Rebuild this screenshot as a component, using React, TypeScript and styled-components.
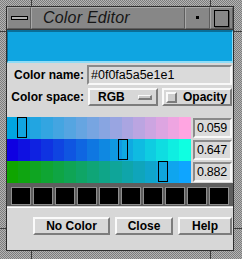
import * as React from 'react'
import styled, { createGlobalStyle } from 'styled-components'

const GlobalStyle = createGlobalStyle`
  html, body {
    margin: 0;
    padding: 0;
    background: #d7d7d7;
  }
  body {
    font-family: "Liberation Sans", Arial, sans-serif;
  }
`

// Motif-ish window frame with the stippled border and corner notches
const Frame = styled.div`
  width: 242px;
  height: 259px;
  box-sizing: border-box;
  padding: 6px 8px 8px 6px;
  display: flex;
  background:
    linear-gradient(#3c3c3c, #3c3c3c) 31px 0 / 1px 6px no-repeat,
    linear-gradient(#3c3c3c, #3c3c3c) 210px 0 / 1px 6px no-repeat,
    linear-gradient(#3c3c3c, #3c3c3c) 31px 251px / 1px 8px no-repeat,
    linear-gradient(#3c3c3c, #3c3c3c) 210px 251px / 1px 8px no-repeat,
    linear-gradient(#3c3c3c, #3c3c3c) 0 31px / 6px 1px no-repeat,
    linear-gradient(#3c3c3c, #3c3c3c) 0 228px / 6px 1px no-repeat,
    linear-gradient(#3c3c3c, #3c3c3c) 234px 31px / 8px 1px no-repeat,
    linear-gradient(#3c3c3c, #3c3c3c) 234px 228px / 8px 1px no-repeat,
    repeating-conic-gradient(#b4b4b4 0 25%, #7c7c7c 0 50%) 0 0 / 2px 2px;
`

const Inner = styled.div`
  flex: 1;
  display: flex;
  flex-direction: column;
  border: 1px solid #2e2e2e;
  background: #d7d7d7;
`

const TitleBar = styled.div`
  display: flex;
  height: 22px;
  background: #878787;
  border-bottom: 1px solid #3a3a3a;
`

const TitleButton = styled.div<{ $w: number }>`
  width: ${(p) => p.$w}px;
  box-sizing: border-box;
  border-top: 1px solid #a9a9a9;
  border-left: 1px solid #a9a9a9;
  border-right: 1px solid #5e5e5e;
  border-bottom: 1px solid #5e5e5e;
  display: flex;
  align-items: center;
  justify-content: center;
`

const Title = styled(TitleButton)`
  flex: 1;
  justify-content: flex-start;
  padding-left: 11px;
  font-style: italic;
  font-size: 16px;
  color: #161616;
  letter-spacing: 0.2px;
`

const MenuBar = styled.div`
  width: 15px;
  height: 2px;
  border: 1px solid #000;
  background: #b0b0b0;
`

const MinDot = styled.div`
  width: 3px;
  height: 3px;
  background: #000;
  margin-top: -1px;
`

const MaxBox = styled.div`
  width: 13px;
  height: 15px;
  border: 1px solid #000;
  box-shadow: 1px 1px 0 #5a5a5a;
`

const Swatch = styled.div<{ $color: string }>`
  height: 33px;
  box-sizing: border-box;
  background: ${(p) => p.$color};
  border-top: 2px solid #0a6e98;
  border-left: 1px solid #0a6e98;
  border-bottom: 2px solid #8fdcf6;
  border-right: 1px solid #8fdcf6;
`

const Form = styled.div`
  display: grid;
  grid-template-columns: 80px 1fr;
  row-gap: 3px;
  margin-top: 2px;
  padding-right: 1px;
`

const Label = styled.div`
  font-weight: bold;
  font-size: 12px;
  color: #000;
  text-align: right;
  padding-right: 3px;
  display: flex;
  align-items: center;
  justify-content: flex-end;
`

const sunken = `
  box-sizing: border-box;
  border-style: solid;
  border-width: 2px;
  border-color: #8a8a8a #f8f8f8 #f8f8f8 #8a8a8a;
`

const raised = `
  box-sizing: border-box;
  border-style: solid;
  border-width: 2px;
  border-color: #fafafa #7c7c7c #7c7c7c #fafafa;
`

const TextField = styled.div`
  ${sunken}
  height: 20px;
  background: #dadada;
  font-size: 12.5px;
  color: #000;
  padding-left: 2px;
  display: flex;
  align-items: center;
`

const Controls = styled.div`
  display: flex;
  gap: 4px;
  padding-left: 1px;
`

const OptionButton = styled.div`
  ${raised}
  flex: 1;
  height: 18px;
  background: #d7d7d7;
  display: flex;
  align-items: center;
  font-weight: bold;
  font-size: 12px;
  color: #000;
`

const OptionText = styled.span`
  flex: 1;
  padding-left: 8px;
`

const Indicator = styled.div`
  ${raised}
  border-width: 1px 2px 2px 1px;
  width: 14px;
  height: 5px;
  margin-right: 4px;
  background: #c9c9c9;
`

const Check = styled.div`
  ${raised}
  width: 11px;
  height: 11px;
  margin: 0 6px 0 2px;
  background: #cdcdcd;
`

const Sliders = styled.div`
  margin-top: 11px;
  display: flex;
  flex-direction: column;
  padding-right: 1px;
`

const SliderRow = styled.div`
  display: flex;
  align-items: center;
  gap: 2px;
  height: 22px;
`

const Track = styled.div<{ $bands: string }>`
  position: relative;
  flex: 1;
  height: 22px;
  background: ${(p) => p.$bands};
`

const Thumb = styled.div`
  position: absolute;
  top: 0;
  width: 10px;
  height: 21px;
  box-sizing: border-box;
  border: 1px solid #000;
`

const ValueField = styled(TextField)`
  width: 39px;
  letter-spacing: -0.3px;
`

const Palette = styled.div`
  display: flex;
  gap: 2px;
  height: 23px;
  box-sizing: border-box;
  padding: 4px 0 1px 4px;
  background: #5e5e5e;
`

const Cell = styled.div`
  width: 20px;
  height: 18px;
  box-sizing: border-box;
  background: #000;
  border: 1px solid #8e8e8e;
`

const ButtonBar = styled.div`
  margin-top: 1px;
  border-top: 1px solid #fff;
  flex: 1;
  display: flex;
  justify-content: flex-end;
  align-items: flex-start;
  gap: 5px;
  padding: 9px 1px 0 0;
`

const PushButton = styled.div<{ $w: number }>`
  ${raised}
  width: ${(p) => p.$w}px;
  height: 18px;
  display: flex;
  align-items: center;
  justify-content: center;
  font-weight: bold;
  font-size: 12px;
  color: #000;
  background: #d7d7d7;
`

// stepped gradient, like the dithered 16-band Motif slider
const bands = (from: number[], to: number[]) => {
  const n = 16
  const stops: string[] = []
  for (let i = 0; i < n; i++) {
    const t = i / (n - 1)
    const c = from.map((f, k) => Math.round(f + (to[k] - f) * t))
    const col = `rgb(${c.join(',')})`
    stops.push(`${col} ${(i * 100) / n}% ${((i + 1) * 100) / n}%`)
  }
  return `linear-gradient(to right, ${stops.join(', ')})`
}

const channels = [
  { value: 0.059, from: [0, 165, 225], to: [255, 165, 225] },
  { value: 0.647, from: [15, 0, 225], to: [15, 255, 225] },
  { value: 0.882, from: [15, 165, 0], to: [15, 165, 255] },
]

export default function App() {
  return (
    <>
      <GlobalStyle />
      <Frame>
        <Inner>
          <TitleBar>
            <TitleButton $w={24}>
              <MenuBar />
            </TitleButton>
            <Title $w={0}>Color Editor</Title>
            <TitleButton $w={25}>
              <MinDot />
            </TitleButton>
            <TitleButton $w={23}>
              <MaxBox />
            </TitleButton>
          </TitleBar>
          <Swatch $color="#0fa5e1" />
          <Form>
            <Label>Color name:</Label>
            <TextField>#0f0fa5a5e1e1</TextField>
            <Label>Color space:</Label>
            <Controls>
              <OptionButton>
                <OptionText>RGB</OptionText>
                <Indicator />
              </OptionButton>
              <OptionButton>
                <Check />
                Opacity
              </OptionButton>
            </Controls>
          </Form>
          <Sliders>
            {channels.map((ch, i) => (
              <SliderRow key={i}>
                <Track $bands={bands(ch.from, ch.to)}>
                  <Thumb style={{ left: Math.round(ch.value * 171) }} />
                </Track>
                <ValueField>{ch.value.toFixed(3)}</ValueField>
              </SliderRow>
            ))}
          </Sliders>
          <Palette>
            {Array.from({ length: 10 }, (_, i) => (
              <Cell key={i} />
            ))}
          </Palette>
          <ButtonBar>
            <PushButton $w={77}>No Color</PushButton>
            <PushButton $w={58}>Close</PushButton>
            <PushButton $w={54}>Help</PushButton>
          </ButtonBar>
        </Inner>
      </Frame>
    </>
  )
}
